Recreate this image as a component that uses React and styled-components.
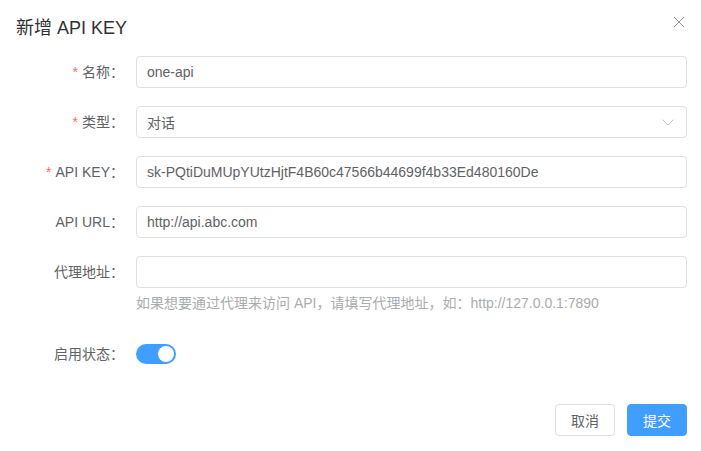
import React from 'react';
import styled, { createGlobalStyle } from 'styled-components';

const GlobalStyle = createGlobalStyle`
  body {
    margin: 0;
    background: #fff;
    font-family: "Liberation Sans", "Noto Sans CJK SC", sans-serif;
  }
`

const Dialog = styled.div`
  width: 701px;
  height: 451px;
  box-sizing: border-box;
  background: #fff;
  display: flex;
  flex-direction: column;
`

const Header = styled.div`
  display: flex;
  justify-content: space-between;
  align-items: flex-start;
  padding: 16px 16px 0 16px;
`

const Title = styled.div`
  font-size: 18px;
  line-height: 24px;
  color: #303133;
`

const CloseBtn = styled.button`
  border: none;
  background: none;
  padding: 0;
  margin-top: 1px;
  margin-right: 1px;
  width: 10px;
  height: 10px;
  display: flex;
  cursor: pointer;
`

const Body = styled.div`
  padding: 16px 14px 0 16px;
  flex: 1;
`

const FormItem = styled.div`
  display: flex;
  align-items: flex-start;
  margin-bottom: ${props => props.gap || '18px'};
`

const Label = styled.label`
  width: 120px;
  flex-shrink: 0;
  box-sizing: border-box;
  padding-right: 12px;
  text-align: right;
  font-size: 14px;
  line-height: 32px;
  color: #606266;
`

const Star = styled.span`
  color: #f56c6c;
  margin-right: 4px;
`

const Content = styled.div`
  flex: 1;
  min-height: 32px;
  display: flex;
  flex-direction: column;
  justify-content: center;
`

const InputBox = styled.div`
  height: 32px;
  box-sizing: border-box;
  border: 1px solid #dcdfe6;
  border-radius: 4px;
  padding: 0 12px 0 10px;
  display: flex;
  align-items: center;
  justify-content: space-between;
  font-size: 14px;
  color: #606266;
`

const Help = styled.div`
  margin-top: 5px;
  font-size: 14px;
  line-height: 20px;
  color: #a8abb2;
`

const Switch = styled.div`
  width: 40px;
  height: 20px;
  border-radius: 10px;
  background: ${props => (props.on ? '#409eff' : '#dcdfe6')};
  position: relative;
`

const Knob = styled.span`
  position: absolute;
  top: 2px;
  left: ${props => (props.on ? '22px' : '2px')};
  width: 16px;
  height: 16px;
  border-radius: 50%;
  background: #fff;
`

const Footer = styled.div`
  display: flex;
  justify-content: flex-end;
  gap: 12px;
  padding: 0 14px 15px 16px;
`

const Button = styled.button`
  width: 60px;
  height: 32px;
  border-radius: 4px;
  font-family: inherit;
  font-size: 14px;
  cursor: pointer;
  border: 1px solid ${props => (props.primary ? '#409eff' : '#dcdfe6')};
  background: ${props => (props.primary ? '#409eff' : '#fff')};
  color: ${props => (props.primary ? '#fff' : '#606266')};
`

const Arrow = () => (
  <svg width="12" height="7" viewBox="0 0 12 7" fill="none">
    <path d="M0.5 0.5 L6 6 L11.5 0.5" stroke="#c0c4cc" strokeWidth="1" />
  </svg>
)

export default function App() {
  return (
    <Dialog>
      <GlobalStyle />
      <Header>
        <Title>新增 API KEY</Title>
        <CloseBtn>
          <svg width="10" height="10" viewBox="0 0 10 10">
            <path d="M0 0 L10 10 M10 0 L0 10" stroke="#909399" strokeWidth="1" />
          </svg>
        </CloseBtn>
      </Header>
      <Body>
        <FormItem>
          <Label><Star>*</Star>名称：</Label>
          <Content><InputBox>one-api</InputBox></Content>
        </FormItem>
        <FormItem>
          <Label><Star>*</Star>类型：</Label>
          <Content><InputBox>对话<Arrow /></InputBox></Content>
        </FormItem>
        <FormItem>
          <Label><Star>*</Star>API KEY：</Label>
          <Content><InputBox>sk-PQtiDuMUpYUtzHjtF4B60c47566b44699f4b33Ed480160De</InputBox></Content>
        </FormItem>
        <FormItem>
          <Label>API URL：</Label>
          <Content><InputBox>http://api.abc.com</InputBox></Content>
        </FormItem>
        <FormItem gap="25px">
          <Label>代理地址：</Label>
          <Content>
            <InputBox />
            <Help>如果想要通过代理来访问 API，请填写代理地址，如：http://127.0.0.1:7890</Help>
          </Content>
        </FormItem>
        <FormItem>
          <Label>启用状态：</Label>
          <Content>
            <Switch on><Knob on /></Switch>
          </Content>
        </FormItem>
      </Body>
      <Footer>
        <Button>取消</Button>
        <Button primary>提交</Button>
      </Footer>
    </Dialog>
  );
}
